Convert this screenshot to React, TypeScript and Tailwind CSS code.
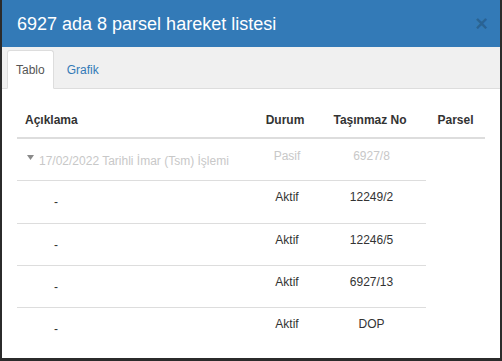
import React from "react";

const rows = [
  { durum: "Aktif", no: "12249/2", h: "h-[43px]" },
  { durum: "Aktif", no: "12246/5", h: "h-[42px]" },
  { durum: "Aktif", no: "6927/13", h: "h-[42px]" },
  { durum: "Aktif", no: "DOP", h: "h-[42px]" },
];

export default function App() {
  return (
    <div className="h-[361px] w-[502px] bg-[#2b2b2b] pl-[2px] font-['Liberation_Sans',Arial,sans-serif]">
      <div className="h-[358px] w-[498px] bg-white">
        {/* header */}
        <div className="flex h-[47px] items-center justify-between bg-[#337ab7] pl-[15px] pr-[12px]">
          <h4 className="text-[18px] leading-[20px] text-white">6927 ada 8 parsel hareket listesi</h4>
          <button className="text-[22px] font-bold leading-[20px] text-black/20">×</button>
        </div>

        {/* tabs */}
        <div className="flex h-[42px] border-b border-[#dddddd] bg-[#f0f0f0] pl-[5px] pt-[3px]">
          <div className="-mb-px flex h-[39px] items-center rounded-t-[3px] border border-[#dddddd] border-b-transparent bg-white px-[8px] text-[12px] text-[#555555]">
            Tablo
          </div>
          <div className="-mb-px ml-[4px] flex h-[39px] items-center border border-transparent px-[8px] text-[12px] text-[#337ab7]">
            Grafik
          </div>
        </div>

        {/* table */}
        <div className="px-[15px] pt-[21px] text-[12px] leading-[20px]">
          <div className="flex w-[468px] border-b-2 border-[#dddddd] pb-[7px] font-bold text-[#333333]">
            <div className="w-[231px] pl-[8px]">Açıklama</div>
            <div className="w-[74px] text-center">Durum</div>
            <div className="w-[96px] text-center">Taşınmaz No</div>
            <div className="w-[67px] pl-[8px] text-center">Parsel</div>
          </div>

          <div className="flex h-[42px] w-[409px] border-b border-[#dddddd] text-[#c8c8c8]">
            <div className="flex w-[231px] items-center pl-[10px] pt-[2px]">
              <svg width="7" height="5" viewBox="0 0 7 5" className="mr-[5px] -translate-y-[3px]">
                <polygon points="0,0 7,0 3.5,5" fill="#8a8a8a" />
              </svg>
              17/02/2022 Tarihli İmar (Tsm) İşlemi
            </div>
            <div className="w-[74px] pl-[4px] pt-[7px] text-center">Pasif</div>
            <div className="w-[104px] pr-[5px] pt-[7px] text-center">6927/8</div>
          </div>

          {rows.map((r, i) => (
            <div
              key={r.no}
              className={`flex ${r.h} w-[409px] text-[#333333] ${i < rows.length - 1 ? "border-b border-[#dddddd]" : ""}`}
            >
              <div className="flex w-[231px] items-center pl-[37px]">-</div>
              <div className="w-[74px] pl-[4px] pt-[6px] text-center">{r.durum}</div>
              <div className="w-[104px] pr-[5px] pt-[6px] text-center">{r.no}</div>
            </div>
          ))}
        </div>
      </div>
    </div>
  );
}
